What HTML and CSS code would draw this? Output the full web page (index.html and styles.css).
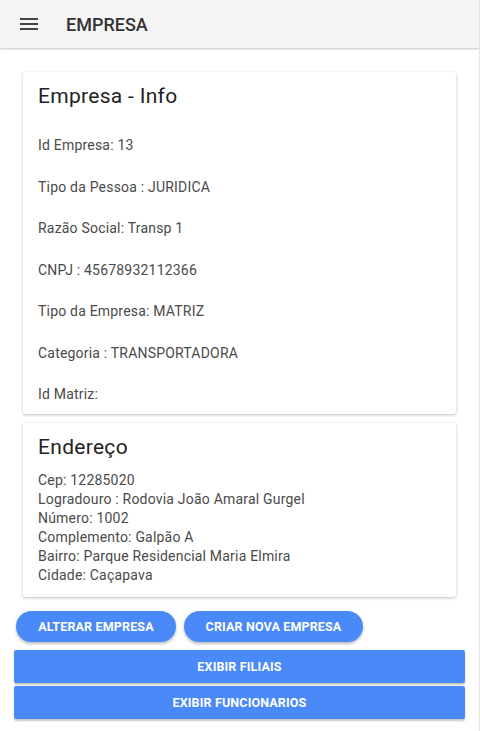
FILE: index.html
```html
<!DOCTYPE html>
<html lang="pt-BR">
<head>
<meta charset="utf-8">
<title>Empresa</title>
<link rel="stylesheet" href="styles.css">
</head>
<body>
<header class="toolbar">
  <button class="menu-btn" aria-label="menu">
    <svg width="18" height="12" viewBox="0 0 18 12"><path d="M0 1h18M0 6h18M0 11h18" stroke="#444" stroke-width="2"/></svg>
  </button>
  <h1 class="toolbar-title">EMPRESA</h1>
</header>
<main class="content">
  <section class="card info">
    <h2 class="card-title">Empresa - Info</h2>
    <p class="item">Id Empresa: 13</p>
    <p class="item">Tipo da Pessoa : JURIDICA</p>
    <p class="item">Razão Social: Transp 1</p>
    <p class="item">CNPJ : 45678932112366</p>
    <p class="item">Tipo da Empresa: MATRIZ</p>
    <p class="item">Categoria : TRANSPORTADORA</p>
    <p class="item">Id Matriz:</p>
  </section>
  <section class="card address">
    <h2 class="card-title">Endereço</h2>
    <div class="lines">
      <p>Cep: 12285020</p>
      <p>Logradouro : Rodovia João Amaral Gurgel</p>
      <p>Número: 1002</p>
      <p>Complemento: Galpão A</p>
      <p>Bairro: Parque Residencial Maria Elmira</p>
      <p>Cidade: Caçapava</p>
    </div>
  </section>
  <div class="pill-row">
    <button class="btn pill alter">ALTERAR EMPRESA</button>
    <button class="btn pill create">CRIAR NOVA EMPRESA</button>
  </div>
  <button class="btn block first">EXIBIR FILIAIS</button>
  <button class="btn block">EXIBIR FUNCIONARIOS</button>
</main>
</body>
</html>
```

FILE: styles.css
```css
* { box-sizing: border-box; }
html, body {
  margin: 0;
  padding: 0;
  background: #fff;
  font-family: Roboto, "Liberation Sans", sans-serif;
}
body {
  width: 480px;
  min-height: 731px;
  border-right: 1px solid #e6e6e6;
}
.toolbar {
  height: 48px;
  background: #f5f5f5;
  display: flex;
  align-items: center;
  box-shadow: 0 1px 2px rgba(0,0,0,0.22);
  position: relative;
  z-index: 1;
}
.menu-btn {
  border: 0;
  background: transparent;
  padding: 0;
  margin-left: 20px;
  width: 18px;
  height: 12px;
  display: flex;
}
.toolbar-title {
  margin: 0 0 0 28px;
  font-size: 18px;
  font-weight: 500;
  color: #333;
}
.content {
  display: flex;
  flex-direction: column;
  padding-top: 24px;
}
.card {
  margin: 0 23px;
  background: #fff;
  border-radius: 2px;
  box-shadow: 0 1px 3px rgba(0,0,0,0.25), 0 0 1px rgba(0,0,0,0.08);
  padding: 10px 15px;
  color: #4a4a4a;
}
.card-title {
  margin: 0;
  font-size: 21px;
  line-height: 28px;
  font-weight: 400;
  letter-spacing: 0.3px;
  color: #222;
}
.info .item {
  margin: 21.5px 0 0;
  font-size: 14px;
  line-height: 20px;
  letter-spacing: 0.2px;
}
.info .item:first-of-type { margin-top: 25px; }
.address { margin-top: 9px; padding-bottom: 12px; }
.lines { margin-top: 10px; }
.lines p {
  margin: 0;
  font-size: 14px;
  line-height: 19px;
  letter-spacing: 0.2px;
}
.btn {
  border: 0;
  background: #4a89f8;
  color: #fff;
  font-family: Roboto, "Liberation Sans", sans-serif;
  font-weight: 700;
  font-size: 12.5px;
  letter-spacing: 0.15px;
  cursor: pointer;
}
.pill-row {
  display: flex;
  gap: 8px;
  margin: 14px 0 0 16px;
}
.pill {
  height: 31px;
  border-radius: 16px;
  box-shadow: 0 2px 3px rgba(0,0,0,0.25);
}
.alter { width: 160px; }
.create { width: 179px; }
.block {
  margin: 0 14px;
  height: 33px;
  border-radius: 2px;
  box-shadow: 0 2px 2px rgba(0,0,0,0.22);
  margin-top: 3px;
}
.block.first { margin-top: 8px; }
```
